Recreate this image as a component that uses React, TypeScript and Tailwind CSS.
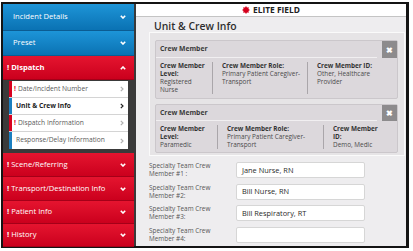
import clsx from 'clsx';

const Chevron = ({ dir = 'down', className }: { dir?: 'down' | 'up' | 'right'; className?: string }) => {
  if (dir === 'right') {
    return (
      <svg width="4" height="6" viewBox="0 0 4 6" className={className}>
        <polyline points="0.8,0.8 3,3 0.8,5.2" fill="none" stroke="currentColor" strokeWidth="1.2" />
      </svg>
    );
  }
  return (
    <svg width="6" height="4" viewBox="0 0 6 4" className={className}>
      <polyline
        points={dir === 'down' ? '0.8,0.8 3,3 5.2,0.8' : '0.8,3.2 3,1 5.2,3.2'}
        fill="none"
        stroke="currentColor"
        strokeWidth="1.6"
      />
    </svg>
  );
};

type HeaderProps = { label: string; tone: 'blue' | 'red'; open?: boolean; h: string; bold?: boolean };

const NavHeader = ({ label, tone, open, h, bold }: HeaderProps) => (
  <div
    className={clsx(
      'flex items-center justify-between text-white shrink-0 pr-[8px]',
      h,
      tone === 'blue'
        ? 'bg-linear-to-b from-[#1d95d8] to-[#0a72b3] pl-[10px] border-b border-[#0b5c92]'
        : 'bg-linear-to-b from-[#e5142f] to-[#cb001d] pl-[4px] border-b border-[#a50018]'
    )}
  >
    <span className={clsx('text-[7.6px] leading-none', bold ? 'font-bold' : 'font-medium')}>
      {tone === 'red' && <span className="font-bold mr-[2px]">!</span>}
      {label}
    </span>
    <Chevron dir={open ? 'up' : 'down'} />
  </div>
);

const subItems = [
  { label: 'Date/Incident Number', alert: true },
  { label: 'Unit & Crew Info', active: true },
  { label: 'Dispatch Information', alert: true },
  { label: 'Response/Delay Information' },
];

const Sidebar = () => (
  <aside className="w-[133px] h-full bg-[#3a3a3a] pr-[2px] flex flex-col">
    <NavHeader label="Incident Details" tone="blue" h="h-[27px]" />
    <NavHeader label="Preset" tone="blue" h="h-[25px]" />
    <NavHeader label="Dispatch" tone="red" h="h-[24px]" open bold />
    <div className="pl-[6px] pr-[6px] pt-[1px] pb-[4px] flex flex-col">
      {subItems.map((item) => (
        <div key={item.label} className="flex h-[17px] border-b border-[#d4d4d4] last:border-b-0">
          <div className={clsx('w-[3px]', item.alert ? 'bg-[#d8001f]' : 'bg-[#1b7fc0]')} />
          <div
            className={clsx(
              'flex-1 bg-white flex items-center justify-between pr-[4px] text-[6.7px]',
              item.alert ? 'pl-[2px]' : 'pl-[4px]'
            )}
          >
            <span className={item.active ? 'font-bold text-[#222]' : 'text-[#5a5a5a]'}>
              {item.alert && <span className="font-bold text-[#e0001e] mr-[2px]">!</span>}
              {item.label}
            </span>
            <Chevron dir="right" className={item.active ? 'text-[#222]' : 'text-[#b0b0b0]'} />
          </div>
        </div>
      ))}
    </div>
    <NavHeader label="Scene/Referring" tone="red" h="h-[24px]" />
    <NavHeader label="Transport/Destination Info" tone="red" h="h-[24px]" />
    <NavHeader label="Patient Info" tone="red" h="h-[23px]" />
    <NavHeader label="History" tone="red" h="h-[23px]" />
  </aside>
);

type Col = { head: string[]; value: string[]; w: string };

const CrewCard = ({ cols, header, body }: { cols: Col[]; header: string; body: string }) => (
  <div className="bg-[#dcd8dc] border border-[#cbc7cb] rounded-[2px]">
    <div className={clsx('flex', header)}>
      <div className="flex-1 mr-[5px] border-b border-[#f1eff1] flex items-center pl-[4px] text-[6.8px] font-bold text-[#3a3a3a]">
        Crew Member
      </div>
      <div className="w-[15px] h-full bg-[#8d8b8d] text-white flex items-center justify-center text-[8px] font-bold leading-none">
        ✖
      </div>
    </div>
    <div className={clsx('flex', body)}>
      {cols.map((c, i) => (
        <div
          key={i}
          className={clsx(
            'text-[6.4px] leading-[8px] text-[#4a4a4a]',
            c.w,
            i === 0 ? 'pl-[4px]' : 'pl-[9px] border-l border-[#aaa6aa]'
          )}
        >
          {c.head.map((t) => (
            <div key={t} className="font-bold text-[#333]">
              {t}
            </div>
          ))}
          {c.value.map((t) => (
            <div key={t}>{t}</div>
          ))}
        </div>
      ))}
    </div>
  </div>
);

const members = ['Jane Nurse, RN', 'Bill Nurse, RN', 'Bill Respiratory, RT', ''];

const Logo = () => (
  <svg width="8" height="8" viewBox="0 0 16 16">
    <polygon
      fill="#d4001c"
      points="8,0 10,3 13.6,2.4 13,6 16,8 13,10 13.6,13.6 10,13 8,16 6,13 2.4,13.6 3,10 0,8 3,6 2.4,2.4 6,3"
    />
  </svg>
);

export default function App() {
  return (
    <div className="w-[413px] h-[251px] bg-white pt-[2px] pl-[1px] font-['Open_Sans',sans-serif] overflow-hidden">
      <div className="w-[408px] h-[246px] border-t-2 border-l-2 border-b-2 border-r-[3px] border-[#141414] flex">
        <Sidebar />
        <main className="flex-1 bg-[#eeedef] flex flex-col">
          <div className="h-[13px] bg-white border-b border-[#c4c4c4] flex items-center justify-center gap-[3px]">
            <Logo />
            <span className="text-[8.4px] font-bold text-[#222] leading-none">ELITE FIELD</span>
          </div>
          <h2 className="h-[16px] pl-[18px] pt-[3px] text-[10.4px] font-semibold text-[#2e2e2e] leading-[12px]">
            Unit &amp; Crew Info
          </h2>
          <section className="ml-[13px] mr-[1px] border border-[#fafafa] bg-[#e6e4e6] pt-[7px] pb-[2px] pl-[5px] pr-[6px] flex flex-col gap-[5px]">
            <CrewCard
              header="h-[17px]"
              body="pt-[4px] pb-[4px]"
              cols={[
                { head: ['Crew Member', 'Level:'], value: ['Registered', 'Nurse'], w: 'w-[56px]' },
                { head: ['Crew Member Role:'], value: ['Primary Patient Caregiver-', 'Transport'], w: 'w-[95px]' },
                { head: ['Crew Member ID:'], value: ['Other, Healthcare', 'Provider'], w: 'flex-1' },
              ]}
            />
            <CrewCard
              header="h-[16px]"
              body="pt-[4px] pb-[3px]"
              cols={[
                { head: ['Crew Member', 'Level:'], value: ['Paramedic'], w: 'w-[61px]' },
                { head: ['Crew Member Role:'], value: ['Primary Patient Caregiver-', 'Transport'], w: 'w-[106px]' },
                { head: ['Crew Member', 'ID:'], value: ['Demo, Medic'], w: 'flex-1' },
              ]}
            />
          </section>
          <div className="pl-[13px] pt-[3px] flex flex-col">
            {members.map((m, i) => (
              <div key={i} className="h-[21.7px] flex items-center">
                <div className="w-[87px] text-[6.4px] leading-[8px] text-[#555]">
                  Specialty Team Crew
                  <br />
                  Member #{i + 1}
                  {i === 0 ? ' :' : ':'}
                </div>
                <div className="w-[129px] h-[16px] bg-white border border-[#d6d6d6] rounded-[2px] pl-[5px] flex items-center text-[7.4px] text-[#2a2a2a]">
                  {m}
                </div>
              </div>
            ))}
          </div>
        </main>
      </div>
    </div>
  );
}
